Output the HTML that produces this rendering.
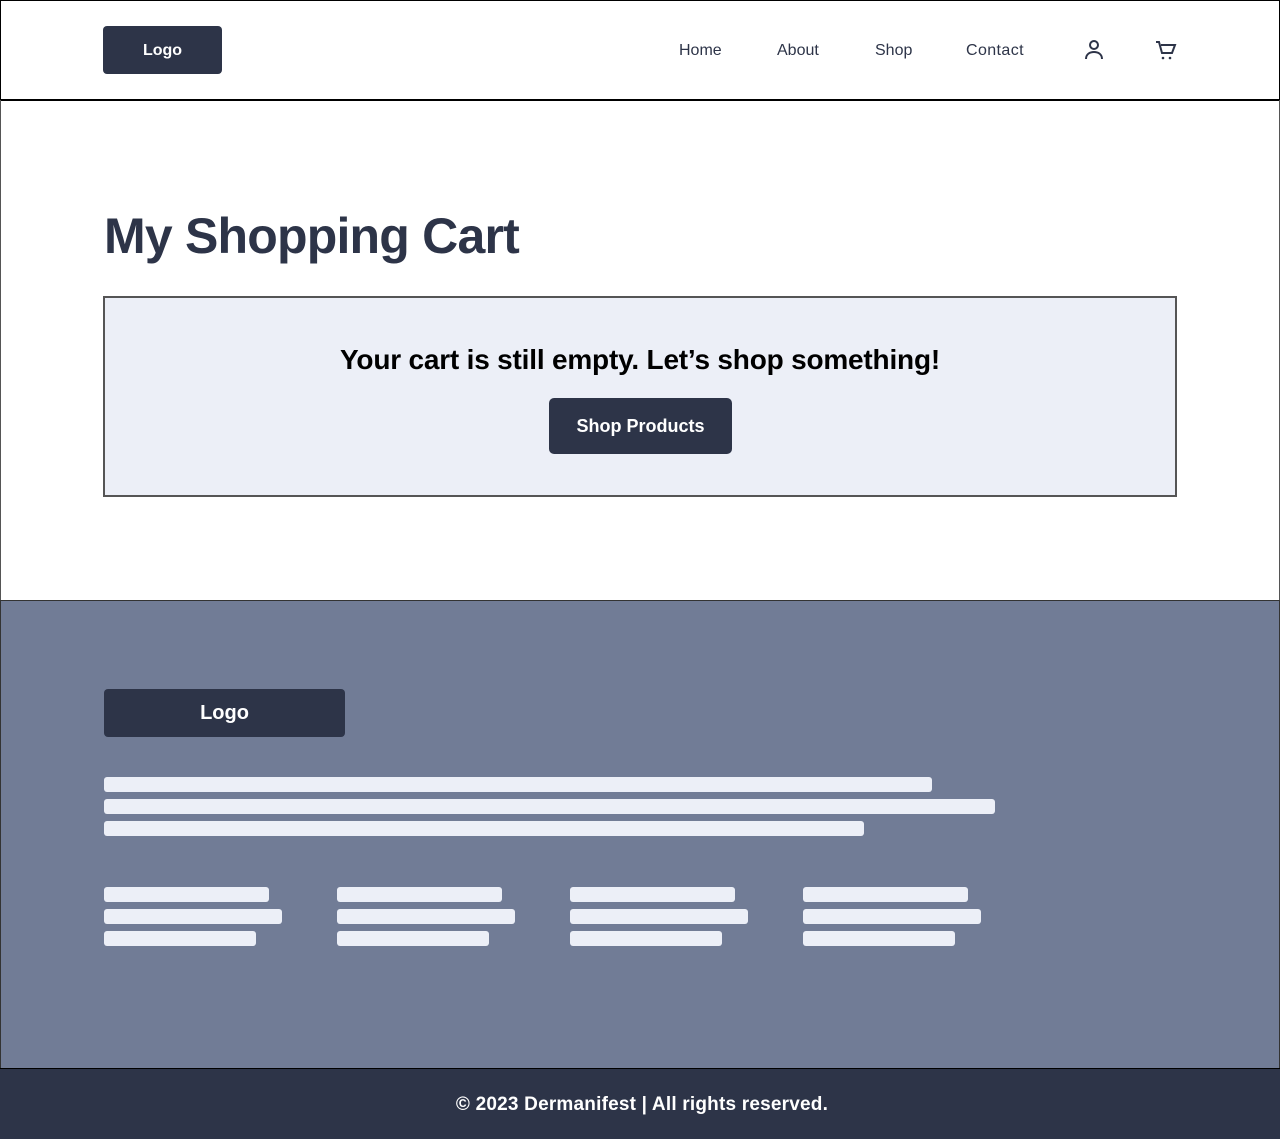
<!DOCTYPE html>
<html><head><meta charset="utf-8"><style>
*{margin:0;padding:0;box-sizing:border-box}
body{width:1280px;height:1139px;position:relative;font-family:"Liberation Sans",sans-serif;background:#fff;overflow:hidden}
.a{position:absolute}
.bar{position:absolute;height:15px;background:#eceff7;border-radius:3px}
.n{position:absolute;top:42px;font-size:16px;color:#2d3448}
</style></head><body>
<div class="a" style="left:0;top:0;width:1280px;height:101px;border:1px solid #000;border-bottom:2px solid #000"></div>
<div class="a" style="left:0;top:100px;width:1280px;height:501px;border-left:1px solid #555;border-right:1px solid #555"></div>
<div class="a" style="left:103px;top:26px;width:119px;height:48px;background:#2d3448;border-radius:4px;color:#fff;font-weight:bold;font-size:16px;line-height:50px;text-align:center">Logo</div>
<div class="n" style="left:679px">Home</div>
<div class="n" style="left:777px">About</div>
<div class="n" style="left:875px">Shop</div>
<div class="n" style="left:966px;letter-spacing:0.4px">Contact</div>
<svg class="a" style="left:1083px;top:38px" width="22" height="24" viewBox="0 0 22 24" fill="none" stroke="#2d3448" stroke-width="2"><circle cx="11" cy="7" r="4"/><path d="M3 21c0-5 4-7 8-7s8 2 8 7"/></svg>
<svg class="a" style="left:1154px;top:40px" width="24" height="22" viewBox="0 0 24 22" fill="none" stroke="#2d3448" stroke-width="2"><path d="M2 2h3l3 11h10l3-8H7"/><circle cx="9" cy="18" r="1.3" fill="#2d3448" stroke="none"/><circle cx="16" cy="18" r="1.3" fill="#2d3448" stroke="none"/></svg>
<div class="a" style="left:104px;top:207px;font-size:50px;font-weight:bold;color:#2d3448;letter-spacing:-0.8px">My Shopping Cart</div>
<div class="a" style="left:103px;top:296px;width:1074px;height:201px;background:#eceff7;border:2px solid #555"></div>
<div class="a" style="left:103px;top:344px;width:1074px;text-align:center;font-size:28px;font-weight:bold;color:#000;letter-spacing:-0.2px">Your cart is still empty. Let’s shop something!</div>
<div class="a" style="left:549px;top:398px;width:183px;height:56px;background:#2d3448;border-radius:5px;color:#fff;font-weight:bold;font-size:18px;line-height:57px;text-align:center">Shop Products</div>
<div class="a" style="left:0;top:600px;width:1280px;height:470px;background:#717c96;border:1px solid #333;border-bottom:none"></div>
<div class="a" style="left:104px;top:689px;width:241px;height:48px;background:#2d3448;border-radius:4px;color:#fff;font-weight:bold;font-size:20px;line-height:49px;text-align:center">Logo</div>
<div class="bar" style="left:104px;top:777px;width:828px"></div>
<div class="bar" style="left:104px;top:799px;width:891px"></div>
<div class="bar" style="left:104px;top:821px;width:760px"></div>
<div class="bar" style="left:104px;top:887px;width:165px"></div><div class="bar" style="left:104px;top:909px;width:178px"></div><div class="bar" style="left:104px;top:931px;width:152px"></div>
<div class="bar" style="left:337px;top:887px;width:165px"></div><div class="bar" style="left:337px;top:909px;width:178px"></div><div class="bar" style="left:337px;top:931px;width:152px"></div>
<div class="bar" style="left:570px;top:887px;width:165px"></div><div class="bar" style="left:570px;top:909px;width:178px"></div><div class="bar" style="left:570px;top:931px;width:152px"></div>
<div class="bar" style="left:803px;top:887px;width:165px"></div><div class="bar" style="left:803px;top:909px;width:178px"></div><div class="bar" style="left:803px;top:931px;width:152px"></div>
<div class="a" style="left:0;top:1068px;width:1280px;height:71px;background:#2d3448;border-top:1px solid #000;color:#fff;font-weight:bold;font-size:19px;line-height:72px;text-align:center;padding-left:4px;letter-spacing:0.2px">© 2023 Dermanifest | All rights reserved.</div>
</body></html>
